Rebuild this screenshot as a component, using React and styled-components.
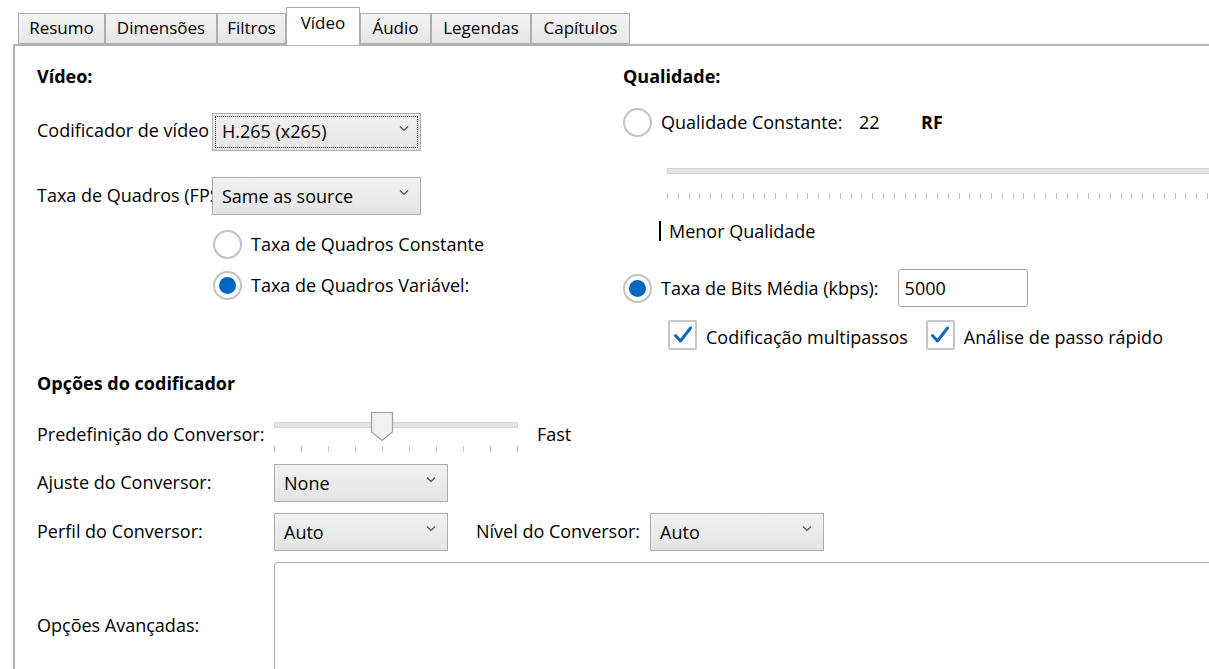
import React from 'react';
import styled, { createGlobalStyle } from 'styled-components';

const GlobalStyle = createGlobalStyle`
  html, body {
    margin: 0;
    padding: 0;
    background: #ffffff;
    overflow: hidden;
  }
  body {
    font-family: 'Open Sans', 'Noto Sans', 'Liberation Sans', sans-serif;
    font-size: 18px;
    color: #000;
  }
`;

const Window = styled.div`
  width: 1209px;
  height: 669px;
  overflow: hidden;
  background: #fff;
`;

const TabBar = styled.div`
  display: flex;
  align-items: flex-end;
  height: 37px;
  padding: 7px 0 0 18px;
  position: relative;
  z-index: 2;
  font-size: 17px;
`;

const Tab = styled.div`
  box-sizing: border-box;
  width: ${(p) => p.$w}px;
  height: ${(p) => (p.$active ? 38 : 31)}px;
  display: flex;
  align-items: center;
  justify-content: center;
  border: 1px solid #acacac;
  border-bottom: ${(p) => (p.$active ? 'none' : '1px solid #acacac')};
  background: ${(p) => (p.$active ? '#ffffff' : 'linear-gradient(#f3f3f3, #e7e7e7)')};
  margin-bottom: ${(p) => (p.$active ? '-1px' : '0')};
  padding-bottom: ${(p) => (p.$active ? '8px' : '2px')};
  white-space: nowrap;
`;

const Panel = styled.div`
  margin-left: 13px;
  width: 1400px;
  height: 700px;
  border-top: 2px solid #b4b4b4;
  border-left: 2px solid #b4b4b4;
  padding: 18px 0 0 22px;
  box-sizing: border-box;
`;

const Upper = styled.div`
  display: flex;
`;

const LeftCol = styled.div`
  width: 586px;
  display: flex;
  flex-direction: column;
`;

const RightCol = styled.div`
  display: flex;
  flex-direction: column;
`;

const Heading = styled.div`
  font-weight: 700;
  height: 24px;
  line-height: 24px;
  margin-top: ${(p) => p.$mt || 0}px;
`;

const FieldRow = styled.div`
  display: flex;
  align-items: center;
  height: ${(p) => p.$h || 38}px;
  margin-top: ${(p) => p.$mt || 0}px;
`;

const FieldLabel = styled.div`
  width: ${(p) => p.$w}px;
  flex-shrink: 0;
  white-space: nowrap;
  margin-top: ${(p) => p.$mt || 0}px;
  margin-bottom: 3px;
`;

const SelectBox = styled.div`
  position: relative;
  z-index: 1;
  box-sizing: border-box;
  width: ${(p) => p.$w}px;
  height: ${(p) => p.$h || 38}px;
  border: 1px solid #acacac;
  background: linear-gradient(#f1f1f1, #e4e4e4);
  display: flex;
  align-items: center;
  padding-left: 9px;
  padding-bottom: 1px;
  flex-shrink: 0;
  white-space: nowrap;

  ${(p) =>
    p.$focused &&
    `
    &::after {
      content: '';
      position: absolute;
      inset: 2px;
      border: 1px dotted #222;
    }
  `}
`;

const Chevron = styled.svg`
  position: absolute;
  right: 11px;
  top: 11px;
`;

const Select = ({ value, width, focused }) => (
  <SelectBox $w={width} $focused={focused}>
    {value}
    <Chevron width="10" height="7" viewBox="0 0 10 7">
      <path d="M1 1.5 L5 5.5 L9 1.5" fill="none" stroke="#4d4d4d" strokeWidth="1.2" />
    </Chevron>
  </SelectBox>
);

const RadioList = styled.div`
  display: flex;
  flex-direction: column;
  gap: 11px;
  margin: 14px 0 0 176px;
`;

const OptionRow = styled.div`
  display: flex;
  align-items: center;
  height: ${(p) => p.$h || 30}px;
  margin-top: ${(p) => p.$mt || 0}px;
  margin-left: ${(p) => p.$ml || 0}px;
  white-space: nowrap;
`;

const RadioCircle = styled.span`
  position: relative;
  box-sizing: border-box;
  width: 29px;
  height: 29px;
  border-radius: 50%;
  border: 2px solid #c2c2c2;
  background: #fff;
  margin-right: 9px;
  flex-shrink: 0;

  &::after {
    content: '';
    display: ${(p) => (p.$checked ? 'block' : 'none')};
    position: absolute;
    left: 4px;
    top: 4px;
    width: 17px;
    height: 17px;
    border-radius: 50%;
    background: #0067c0;
  }
`;

const CheckBox = styled.span`
  box-sizing: border-box;
  width: 29px;
  height: 30px;
  border: 2px solid #c6c6c6;
  border-radius: 2px;
  background: #fff;
  display: flex;
  align-items: center;
  justify-content: center;
  margin-right: 9px;
  flex-shrink: 0;
`;

const OptionItem = styled.div`
  display: flex;
  align-items: center;
  margin-right: ${(p) => p.$gap || 0}px;
`;

const CheckText = styled.span`
  padding-top: 4px;
`;

const Check = ({ label, gap }) => (
  <OptionItem $gap={gap}>
    <CheckBox>
      <svg width="20" height="18" viewBox="0 0 20 18">
        <path d="M2.5 9.5 L7.5 15 L17.5 2" fill="none" stroke="#1467c1" strokeWidth="3" strokeLinecap="round" strokeLinejoin="round" />
      </svg>
    </CheckBox>
    <CheckText>{label}</CheckText>
  </OptionItem>
);

const ValueText = styled.span`
  width: ${(p) => p.$w}px;
  font-weight: ${(p) => (p.$bold ? 700 : 400)};
`;

const Track = styled.div`
  box-sizing: border-box;
  height: 6px;
  width: ${(p) => p.$w}px;
  background: #e3e3e3;
  border: 1px solid #d4d4d4;
  margin-top: ${(p) => p.$mt || 0}px;
  margin-left: ${(p) => p.$ml || 0}px;
`;

const Ticks = styled.div`
  height: 6px;
  width: ${(p) => p.$w}px;
  margin-top: ${(p) => p.$mt || 0}px;
  margin-left: ${(p) => p.$ml || 0}px;
  background: repeating-linear-gradient(
    to right,
    #c4c4c4 0,
    #c4c4c4 1px,
    transparent 1px,
    transparent ${(p) => p.$step}px
  );
`;

const ScaleNote = styled.div`
  display: flex;
  align-items: center;
  height: 24px;
  margin: 20px 0 0 36px;

  &::before {
    content: '';
    width: 2px;
    height: 20px;
    background: #000;
    margin-right: 8px;
  }
`;

const TextInput = styled.div`
  box-sizing: border-box;
  width: 130px;
  height: 38px;
  border: 1px solid #a8a8a8;
  border-radius: 3px;
  display: flex;
  align-items: center;
  padding-left: 6px;
  margin-left: 19px;
`;

const Lower = styled.div`
  display: flex;
  flex-direction: column;
`;

const LowerRow = styled.div`
  display: flex;
  align-items: ${(p) => p.$align || 'center'};
  height: ${(p) => p.$h}px;
  margin-top: ${(p) => p.$mt}px;
`;

const SliderBlock = styled.div`
  position: relative;
  width: 244px;
  height: 42px;
  flex-shrink: 0;
`;

const Thumb = styled.svg`
  position: absolute;
  left: ${(p) => p.$x - 12}px;
  top: 0;
`;

const SideText = styled.span`
  margin-left: ${(p) => p.$ml}px;
  margin-top: ${(p) => p.$mt || 0}px;
  margin-right: ${(p) => p.$mr || 0}px;
  margin-bottom: 3px;
  white-space: nowrap;
`;

const TextArea = styled.div`
  box-sizing: border-box;
  width: 1000px;
  height: 128px;
  border: 1px solid #acacac;
  border-top-left-radius: 4px;
  background: #fff;
  flex-shrink: 0;
`;

const tabs = [
  { label: 'Resumo', w: 87 },
  { label: 'Dimensões', w: 112 },
  { label: 'Filtros', w: 69 },
  { label: 'Vídeo', w: 74, active: true },
  { label: 'Áudio', w: 71 },
  { label: 'Legendas', w: 100 },
  { label: 'Capítulos', w: 99 },
];

export default function App() {
  return (
    <Window>
      <GlobalStyle />
      <TabBar>
        {tabs.map((t) => (
          <Tab key={t.label} $w={t.w} $active={t.active}>
            {t.label}
          </Tab>
        ))}
      </TabBar>
      <Panel>
        <Upper>
          <LeftCol>
            <Heading>Vídeo:</Heading>
            <FieldRow $mt={24} $h={39}>
              <FieldLabel $w={175}>Codificador de vídeo</FieldLabel>
              <Select value="H.265 (x265)" width={209} focused />
            </FieldRow>
            <FieldRow $mt={26} $h={38}>
              <FieldLabel $w={175}>Taxa de Quadros (FPS):</FieldLabel>
              <Select value="Same as source" width={209} />
            </FieldRow>
            <RadioList>
              <OptionRow>
                <RadioCircle />
                Taxa de Quadros Constante
              </OptionRow>
              <OptionRow>
                <RadioCircle $checked />
                Taxa de Quadros Variável:
              </OptionRow>
            </RadioList>
          </LeftCol>
          <RightCol>
            <Heading>Qualidade:</Heading>
            <OptionRow $mt={19}>
              <RadioCircle />
              <ValueText $w={198}>Qualidade Constante:</ValueText>
              <ValueText $w={62}>22</ValueText>
              <ValueText $bold>RF</ValueText>
            </OptionRow>
            <Track $w={560} $mt={31} $ml={44} />
            <Ticks $w={560} $mt={19} $ml={44} $step={10.8} />
            <ScaleNote>Menor Qualidade</ScaleNote>
            <OptionRow $mt={26} $h={38}>
              <RadioCircle $checked />
              Taxa de Bits Média (kbps):
              <TextInput>5000</TextInput>
            </OptionRow>
            <OptionRow $mt={13} $ml={45}>
              <Check label="Codificação multipassos" gap={18} />
              <Check label="Análise de passo rápido" />
            </OptionRow>
          </RightCol>
        </Upper>
        <Lower>
          <Heading $mt={21}>Opções do codificador</Heading>
          <LowerRow $h={42} $mt={16} $align="flex-start">
            <FieldLabel $w={237} $mt={11}>
              Predefinição do Conversor:
            </FieldLabel>
            <SliderBlock>
              <Track $w={244} $mt={11} />
              <Ticks $w={246} $mt={18} $step={27} />
              <Thumb $x={108} width="24" height="31" viewBox="0 0 24 31">
                <path d="M1.5 1.5 H22.5 V21 L12 29.5 L1.5 21 Z" fill="#f0f0f0" stroke="#9d9d9d" strokeWidth="1.2" />
              </Thumb>
            </SliderBlock>
            <SideText $ml={19} $mt={11}>Fast</SideText>
          </LowerRow>
          <LowerRow $h={38} $mt={11}>
            <FieldLabel $w={237}>Ajuste do Conversor:</FieldLabel>
            <Select value="None" width={174} />
          </LowerRow>
          <LowerRow $h={38} $mt={11}>
            <FieldLabel $w={237}>Perfil do Conversor:</FieldLabel>
            <Select value="Auto" width={174} />
            <SideText $ml={28} $mr={10}>Nível do Conversor:</SideText>
            <Select value="Auto" width={174} />
          </LowerRow>
          <LowerRow $h={128} $mt={11}>
            <FieldLabel $w={237}>Opções Avançadas:</FieldLabel>
            <TextArea />
          </LowerRow>
        </Lower>
      </Panel>
    </Window>
  );
}
